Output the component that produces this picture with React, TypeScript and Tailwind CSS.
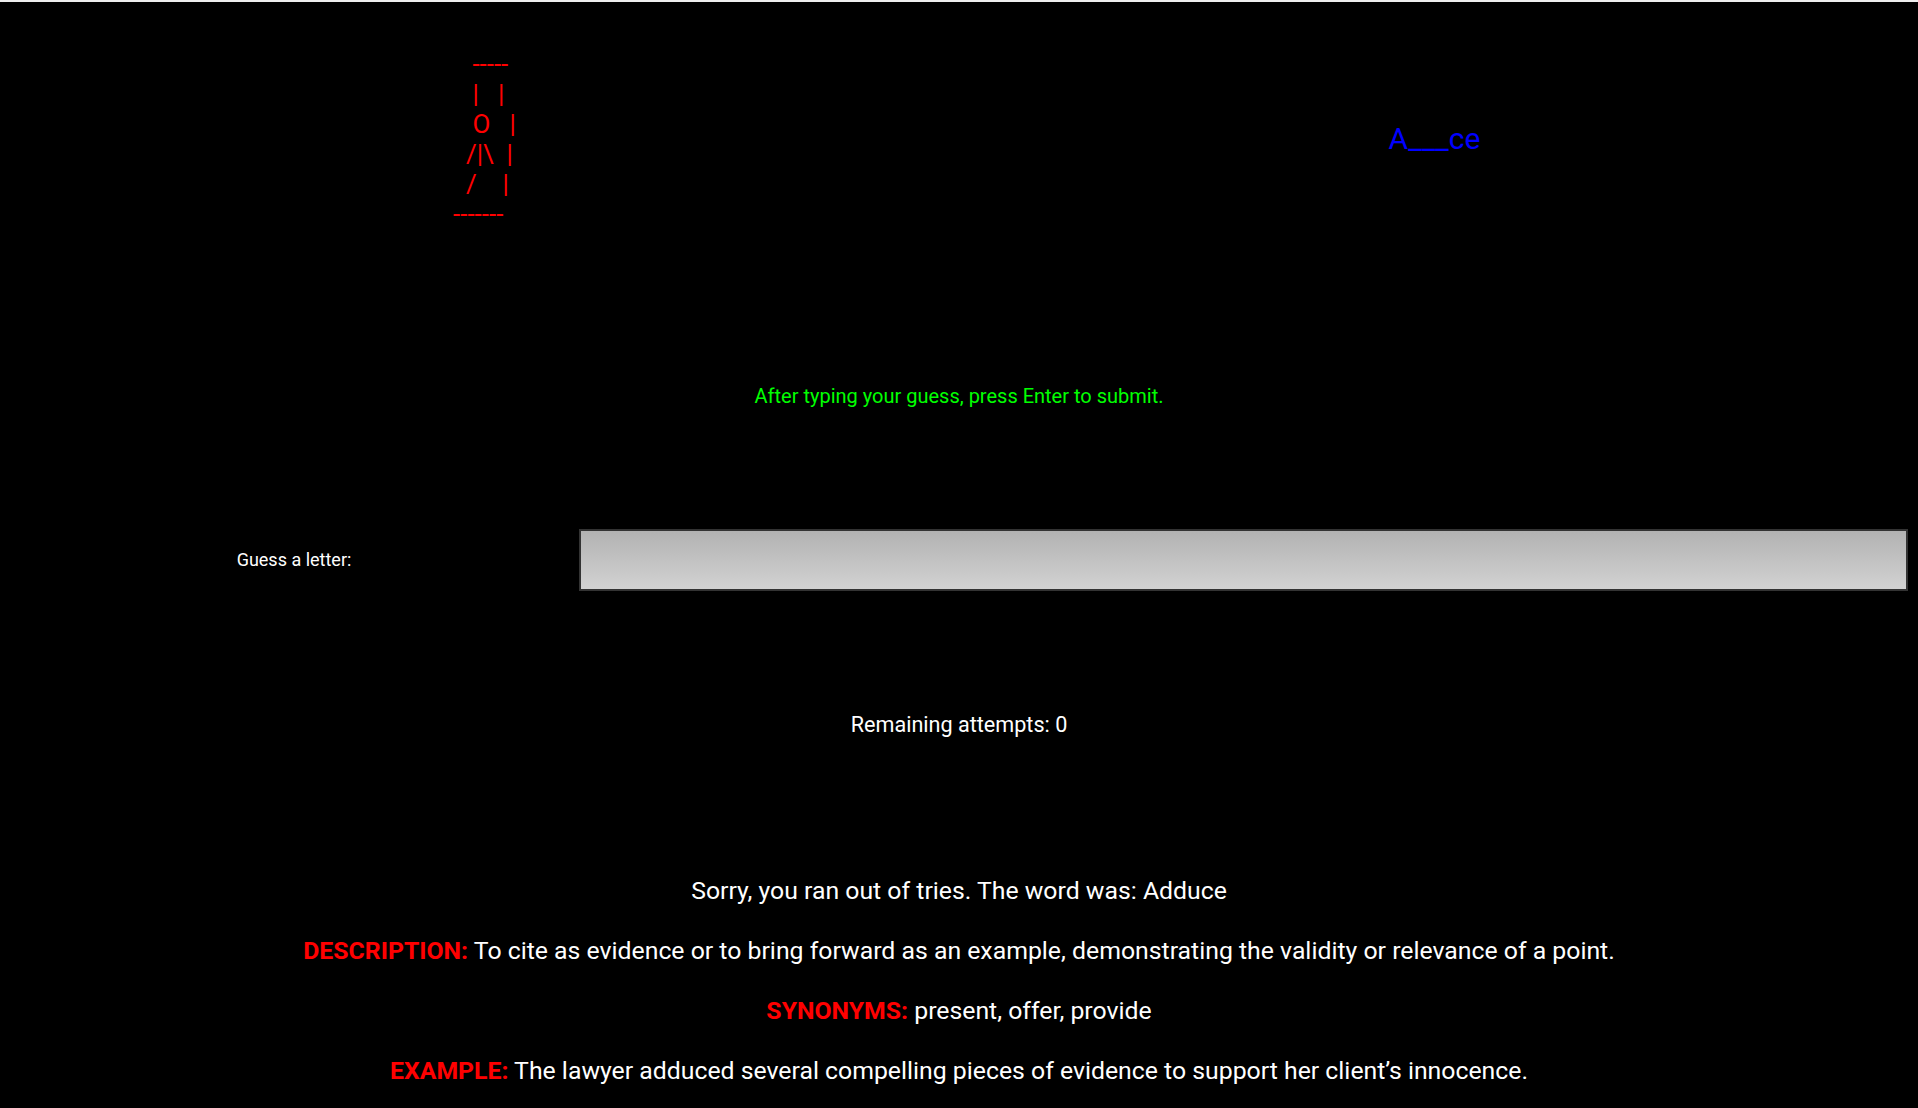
import React from 'react'

const gallows = [
  '   -----',
  '   |   |',
  '   O   |',
  '  /|\\  |',
  '  /    |',
  '-------',
].join('\n')

const Detail: React.FC<{ label: string; children: React.ReactNode }> = ({ label, children }) => (
  <p className="text-[24.8px] leading-[32px] text-white">
    <span className="font-bold text-[#ff0000]">{label}</span> {children}
  </p>
)

export default function App() {
  return (
    <div className="min-h-[1108px] bg-black font-['Roboto',sans-serif] text-white">
      <div className="h-[2px] bg-[#eeeeee]" />

      <div className="mt-[47px] grid grid-cols-2 items-center">
        <div className="pl-[10px] text-center">
          <pre className="inline-block text-left font-['Roboto',sans-serif] text-[26px] leading-[30px] text-[#ff0000]">
            {gallows}
          </pre>
        </div>
        <div className="pr-[8px] pb-[2px] text-center text-[30px] leading-[36px] text-[#0000ff]">A___ce</div>
      </div>

      <p className="mt-[154px] text-center text-[20px] leading-[24px] text-[#00ff00]">
        After typing your guess, press Enter to submit.
      </p>

      <div className="mt-[121px] grid grid-cols-[579px_1fr] items-center pr-[10px]">
        <label htmlFor="guess" className="pl-[9px] pb-[2px] text-center text-[18px] text-white">
          Guess a letter:
        </label>
        <input
          id="guess"
          type="text"
          className="h-[62px] w-full border-2 border-[#333333] bg-gradient-to-b from-[#b2b2b2] to-[#d2d2d2] px-3 text-[20px] text-black outline-none"
        />
      </div>

      <p className="mt-[120px] text-center text-[21.6px] leading-[28px]">Remaining attempts: 0</p>

      <div className="mt-[136px] flex flex-col gap-[28px] text-center">
        <p className="text-[24.8px] leading-[32px] text-white">
          Sorry, you ran out of tries. The word was: Adduce
        </p>
        <Detail label="DESCRIPTION:">
          To cite as evidence or to bring forward as an example, demonstrating the validity or relevance of a
          point.
        </Detail>
        <Detail label="SYNONYMS:">present, offer, provide</Detail>
        <Detail label="EXAMPLE:">
          The lawyer adduced several compelling pieces of evidence to support her client’s innocence.
        </Detail>
      </div>
    </div>
  )
}
